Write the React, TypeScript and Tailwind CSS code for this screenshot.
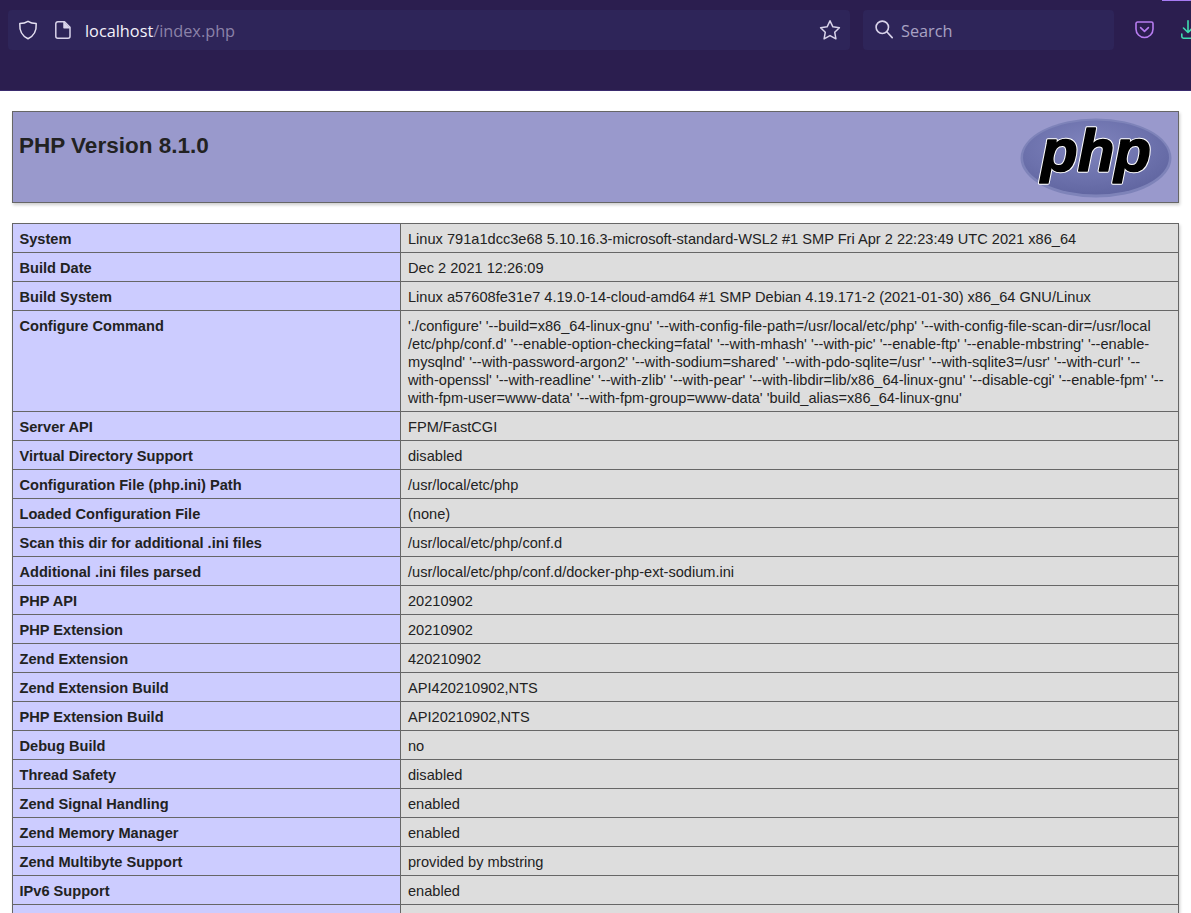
const rows: [string, string][] = [
  ["System", "Linux 791a1dcc3e68 5.10.16.3-microsoft-standard-WSL2 #1 SMP Fri Apr 2 22:23:49 UTC 2021 x86_64"],
  ["Build Date", "Dec 2 2021 12:26:09"],
  ["Build System", "Linux a57608fe31e7 4.19.0-14-cloud-amd64 #1 SMP Debian 4.19.171-2 (2021-01-30) x86_64 GNU/Linux"],
];
const configureLines = [
  "'./configure' '--build=x86_64-linux-gnu' '--with-config-file-path=/usr/local/etc/php' '--with-config-file-scan-dir=/usr/local",
  "/etc/php/conf.d' '--enable-option-checking=fatal' '--with-mhash' '--with-pic' '--enable-ftp' '--enable-mbstring' '--enable-",
  "mysqlnd' '--with-password-argon2' '--with-sodium=shared' '--with-pdo-sqlite=/usr' '--with-sqlite3=/usr' '--with-curl' '--",
  "with-openssl' '--with-readline' '--with-zlib' '--with-pear' '--with-libdir=lib/x86_64-linux-gnu' '--disable-cgi' '--enable-fpm' '--",
  "with-fpm-user=www-data' '--with-fpm-group=www-data' 'build_alias=x86_64-linux-gnu'",
];
const rest: [string, string][] = [
  ["Server API", "FPM/FastCGI"],
  ["Virtual Directory Support", "disabled"],
  ["Configuration File (php.ini) Path", "/usr/local/etc/php"],
  ["Loaded Configuration File", "(none)"],
  ["Scan this dir for additional .ini files", "/usr/local/etc/php/conf.d"],
  ["Additional .ini files parsed", "/usr/local/etc/php/conf.d/docker-php-ext-sodium.ini"],
  ["PHP API", "20210902"],
  ["PHP Extension", "20210902"],
  ["Zend Extension", "420210902"],
  ["Zend Extension Build", "API420210902,NTS"],
  ["PHP Extension Build", "API20210902,NTS"],
  ["Debug Build", "no"],
  ["Thread Safety", "disabled"],
  ["Zend Signal Handling", "enabled"],
  ["Zend Memory Manager", "enabled"],
  ["Zend Multibyte Support", "provided by mbstring"],
  ["IPv6 Support", "enabled"],
  ["\u00a0", "\u00a0"],
];

function Row({ label, children }: { label: string; children: React.ReactNode }) {
  return (
    <tr>
      <td className="w-[388px] border border-[#666] bg-[#ccf] px-[6.5px] pt-[6px] pb-[4px] align-top text-[14.6px] leading-[18px] font-bold whitespace-nowrap">{label}</td>
      <td className="border border-[#666] bg-[#ddd] px-[7px] pt-[6px] pb-[4px] align-top text-[14.6px] leading-[18px]">{children}</td>
    </tr>
  );
}

function PhpLogo() {
  const common = {
    x: 76,
    y: 52.5,
    textAnchor: "middle" as const,
    fontFamily: "'Liberation Sans', sans-serif",
    fontWeight: 700,
    fontStyle: "italic" as const,
    fontSize: 60,
    textLength: 110,
    lengthAdjust: "spacingAndGlyphs" as const,
    strokeLinejoin: "round" as const,
  };
  return (
    <svg width="152" height="80" viewBox="0 0 152 80" className="shrink-0">
      <defs>
        <radialGradient id="pg" cx="0.45" cy="0.35" r="0.7">
          <stop offset="0" stopColor="#8084bd" />
          <stop offset="0.6" stopColor="#6d72ad" />
          <stop offset="1" stopColor="#5f649f" />
        </radialGradient>
      </defs>
      <ellipse cx="76" cy="40" rx="75.5" ry="39.5" fill="#7e83b9" />
      <ellipse cx="76" cy="39.5" rx="73" ry="37" fill="url(#pg)" />
      <text {...common} fill="#fff" stroke="#fff" strokeWidth="3.6">php</text>
      <text {...common} fill="#000" stroke="#000" strokeWidth="1.6">php</text>
    </svg>
  );
}

export default function App() {
  return (
    <div className="h-[913px] overflow-hidden bg-white">
      <div className="relative flex h-[91px] items-start gap-[13px] overflow-hidden border-b border-[#3a2b6e] bg-[#2b1e4f] pt-[10px] pl-[8px] font-['Open_Sans','Noto_Sans',sans-serif]">
        <div className="absolute top-0 right-0 h-px w-[29px] bg-[#a77bf3]" />
        <div className="flex h-[40px] w-[842px] shrink-0 items-center rounded-[4px] bg-[#2e2559] pr-[9px] pl-[10px]">
          <svg width="20" height="20" viewBox="0 0 20 20" fill="none" stroke="#e6e1f2" strokeWidth="1.5" className="shrink-0">
            <path d="M10 1.3 C12.5 2.8 15 3.4 18.2 3.6 C18.6 10 16.2 15.8 10 18.8 C3.8 15.8 1.4 10 1.8 3.6 C5 3.4 7.5 2.8 10 1.3 Z" strokeLinejoin="round" />
          </svg>
          <svg width="18" height="20" viewBox="0 0 18 20" fill="none" stroke="#d9d3ea" strokeWidth="1.5" className="ml-[16px] shrink-0">
            <path d="M3.8 1.8 H10.5 L16 7.3 V16.2 A2 2 0 0 1 14 18.2 H3.8 A2 2 0 0 1 1.8 16.2 V3.8 A2 2 0 0 1 3.8 1.8 Z" strokeLinejoin="round" />
            <path d="M10 2 V7.8 H15.8" fill="#d9d3ea" strokeLinejoin="round" />
          </svg>
          <span className="mt-[3px] ml-[13px] text-[16.3px] whitespace-nowrap text-[#f4f2fa]">
            localhost<span className="text-[#8b82a8]">/index.php</span>
          </span>
          <svg width="22" height="22" viewBox="0 0 22 22" fill="none" stroke="#d9d3ea" strokeWidth="1.5" strokeLinejoin="round" className="ml-auto shrink-0">
            <path d="M11 1.8 L13.9 7.8 L20.4 8.7 L15.7 13.2 L16.9 19.8 L11 16.6 L5.1 19.8 L6.3 13.2 L1.6 8.7 L8.1 7.8 Z" />
          </svg>
        </div>
        <div className="flex h-[40px] w-[251px] shrink-0 items-center rounded-[4px] bg-[#2e2559] pl-[12px]">
          <svg width="18" height="19" viewBox="0 0 18 19" fill="none" stroke="#d9d3ea" strokeWidth="1.6" className="-mt-[2px] shrink-0">
            <circle cx="7.3" cy="7.3" r="6.2" />
            <path d="M11.8 11.8 L17.2 17.6" strokeLinecap="round" />
          </svg>
          <span className="mt-[3px] ml-[8px] text-[16.3px] text-[#a9a2c4]">Search</span>
        </div>
        <svg width="19" height="18" viewBox="0 0 19 18" fill="none" stroke="#b77cf0" strokeWidth="1.6" strokeLinecap="round" strokeLinejoin="round" className="mt-[11px] ml-[8px] shrink-0">
          <path d="M2.6 1 H16.4 A1.6 1.6 0 0 1 18 2.6 V8 A8.5 8.5 0 0 1 1 8 V2.6 A1.6 1.6 0 0 1 2.6 1 Z" />
          <path d="M5.6 6.6 L9.5 10.3 L13.4 6.6" />
        </svg>
        <svg width="20" height="20" viewBox="0 0 20 20" fill="none" stroke="#3fdcb0" strokeWidth="1.6" strokeLinecap="round" strokeLinejoin="round" className="mt-[10px] ml-[14px] shrink-0">
          <path d="M7 0.8 V12 M2.5 8 L7 12.5 L11.5 8" />
          <path d="M0.8 14 V16.6 A1.6 1.6 0 0 0 2.4 18.2 H20" />
        </svg>
      </div>
      <div className="px-[12px] pt-[20px] font-['Liberation_Sans',Arial,sans-serif] text-[#222]">
        <div className="flex h-[92px] w-[1167px] items-start justify-between border border-[#666] bg-[#99c] pt-[6px] pr-[6px] pl-[6px] shadow-[1px_2px_3px_rgba(0,0,0,0.2)]">
          <h1 className="mt-[8px] text-[22.5px] leading-[40px] font-bold">PHP Version 8.1.0</h1>
          <PhpLogo />
        </div>
        <table className="mt-[20px] w-[1167px] table-fixed border-collapse shadow-[1px_2px_3px_rgba(0,0,0,0.2)]">
          <tbody>
            {rows.map(([k, v]) => (
              <Row key={k} label={k}>{v}</Row>
            ))}
            <Row label="Configure Command">
              <div className="whitespace-nowrap">
                {configureLines.map((l) => (
                  <div key={l}>{l}</div>
                ))}
              </div>
            </Row>
            {rest.map(([k, v], i) => (
              <Row key={i} label={k}>{v}</Row>
            ))}
          </tbody>
        </table>
      </div>
    </div>
  );
}
